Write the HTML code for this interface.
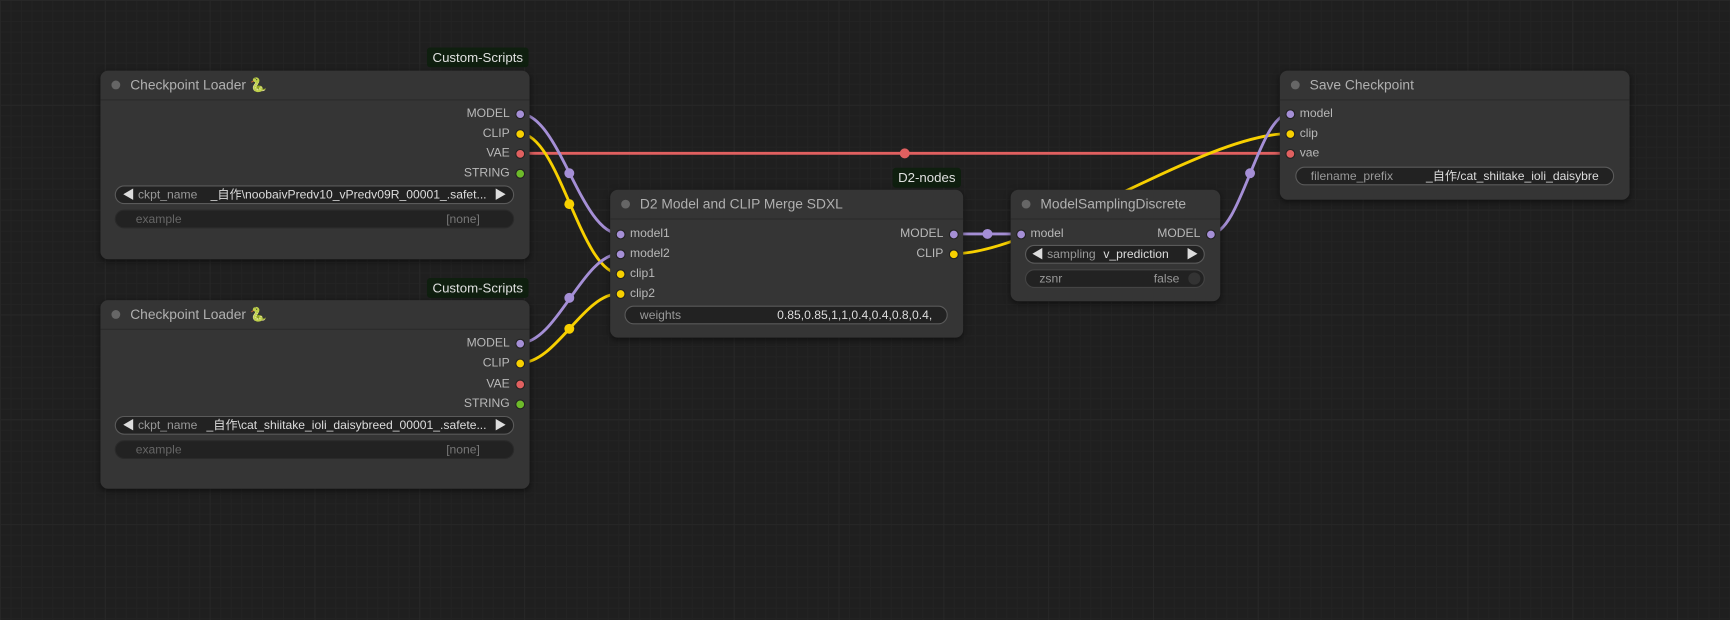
<!DOCTYPE html>
<html><head><meta charset="utf-8"><style>
html,body{margin:0;padding:0;width:1730px;height:620px;overflow:hidden;background:#202020}
#w{position:absolute;left:0;top:0;width:1568px;height:562px;transform:scale(1.10332);transform-origin:0 0;
background-color:#1f1f1f;
background-image:linear-gradient(#272727 1px,transparent 1px),linear-gradient(90deg,#272727 1px,transparent 1px),linear-gradient(#232323 1px,transparent 1px),linear-gradient(90deg,#232323 1px,transparent 1px);
background-size:95px 95px,95px 95px,9.5px 9.5px,9.5px 9.5px;
font-family:"Liberation Sans","Noto Sans CJK JP",sans-serif;font-size:11px;color:#aaa}
svg{position:absolute;left:0;top:0}
.n{position:absolute;background:#353535;border-radius:7px;box-shadow:0 2px 6px rgba(0,0,0,.5)}
.t{height:26px;border-bottom:1px solid #2b2b2b;position:relative;font-size:12.5px;color:#b0b0b0;line-height:26px;padding-left:27px}
.t:before{content:"";position:absolute;left:10px;top:9px;width:8px;height:8px;border-radius:50%;background:#666}
.b{position:absolute;background:#0f1f0f;color:#e0e0e0;font-size:12px;padding:0 5px;line-height:18px;border-radius:3px}
.o,.i{position:absolute;font-size:11px;color:#b8b8b8;line-height:12px}
.o{text-align:right}
.d{position:absolute;width:7px;height:7px;border-radius:50%;border:1px solid #222}
.wd{position:absolute;height:17px;border:1px solid #5a5a5a;border-radius:9px;background:#222;line-height:17px;font-size:11px;color:#999;box-sizing:border-box}
.wd.nb{border-color:#2a2a2a;color:#666}
.v{position:absolute;right:0;color:#ddd}
</style></head><body><div id="w">
<svg width="1568" height="562" viewBox="0 0 1568 562">
<g fill="none" stroke-width="2.6">
<path d="M471 139 L1169 139" stroke="#e06060"/>
<path d="M864 230 C940 230 1090 121 1169 121" stroke="#f7d000"/>
<path d="M471 103 C507 103 526 212 562 212" stroke="#a58fd6"/>
<path d="M471 121 C507 121 526 248 562 248" stroke="#f7d000"/>
<path d="M471 311 C505 311 528 230 562 230" stroke="#a58fd6"/>
<path d="M471 329 C505 329 528 266 562 266" stroke="#f7d000"/>
<path d="M864 212 L925 212" stroke="#a58fd6"/>
<path d="M1097 212 C1125 212 1141 103 1169 103" stroke="#a58fd6"/>
</g>
<g><circle cx="820" cy="139" r="4.5" fill="#e06060"/>
<circle cx="516" cy="157" r="4.5" fill="#a58fd6"/><circle cx="516" cy="185" r="4.5" fill="#f7d000"/>
<circle cx="516" cy="270" r="4.5" fill="#a58fd6"/><circle cx="516" cy="298" r="4.5" fill="#f7d000"/>
<circle cx="895" cy="212" r="4.5" fill="#a58fd6"/><circle cx="1133" cy="157" r="4.5" fill="#a58fd6"/></g>
</svg>

<div class="b" style="left:387px;top:43px">Custom-Scripts</div>
<div class="n" style="left:91px;top:64px;width:389px;height:171px">
<div class="t">Checkpoint Loader 🐍</div>
<div class="o" style="right:18px;top:33px">MODEL</div><div class="d" style="right:4px;top:35px;background:#a58fd6"></div>
<div class="o" style="right:18px;top:51px">CLIP</div><div class="d" style="right:4px;top:53px;background:#f7d000"></div>
<div class="o" style="right:18px;top:69px">VAE</div><div class="d" style="right:4px;top:71px;background:#e06060"></div>
<div class="o" style="right:18px;top:87px">STRING</div><div class="d" style="right:4px;top:89px;background:#6dba2a"></div>
<div class="wd" style="left:13px;top:104px;width:362px;padding-left:6px"><span style="color:#ddd">◀</span> ckpt_name<span class="v" style="right:24px">_自作\noobaivPredv10_vPredv09R_00001_.safet...</span><span class="v" style="right:6px">▶</span></div>
<div class="wd nb" style="left:13px;top:126px;width:362px;padding-left:18px">example<span class="v" style="right:30px;color:#777">[none]</span></div>
</div>

<div class="b" style="left:387px;top:252px">Custom-Scripts</div>
<div class="n" style="left:91px;top:272px;width:389px;height:171px">
<div class="t">Checkpoint Loader 🐍</div>
<div class="o" style="right:18px;top:33px">MODEL</div><div class="d" style="right:4px;top:35px;background:#a58fd6"></div>
<div class="o" style="right:18px;top:51px">CLIP</div><div class="d" style="right:4px;top:53px;background:#f7d000"></div>
<div class="o" style="right:18px;top:70px">VAE</div><div class="d" style="right:4px;top:72px;background:#e06060"></div>
<div class="o" style="right:18px;top:88px">STRING</div><div class="d" style="right:4px;top:90px;background:#6dba2a"></div>
<div class="wd" style="left:13px;top:105px;width:362px;padding-left:6px"><span style="color:#ddd">◀</span> ckpt_name<span class="v" style="right:24px">_自作\cat_shiitake_ioli_daisybreed_00001_.safete...</span><span class="v" style="right:6px">▶</span></div>
<div class="wd nb" style="left:13px;top:127px;width:362px;padding-left:18px">example<span class="v" style="right:30px;color:#777">[none]</span></div>
</div>

<div class="b" style="left:809px;top:152px">D2-nodes</div>
<div class="n" style="left:553px;top:172px;width:320px;height:134px">
<div class="t">D2 Model and CLIP Merge SDXL</div>
<div class="d" style="left:5px;top:36px;background:#a58fd6"></div><div class="i" style="left:18px;top:34px">model1</div>
<div class="d" style="left:5px;top:54px;background:#a58fd6"></div><div class="i" style="left:18px;top:52px">model2</div>
<div class="d" style="left:5px;top:72px;background:#f7d000"></div><div class="i" style="left:18px;top:70px">clip1</div>
<div class="d" style="left:5px;top:90px;background:#f7d000"></div><div class="i" style="left:18px;top:88px">clip2</div>
<div class="o" style="right:18px;top:34px">MODEL</div><div class="d" style="right:4px;top:36px;background:#a58fd6"></div>
<div class="o" style="right:18px;top:52px">CLIP</div><div class="d" style="right:4px;top:54px;background:#f7d000"></div>
<div class="wd" style="left:13px;top:105px;width:293px;padding-left:13px">weights<span class="v" style="right:13px">0.85,0.85,1,1,0.4,0.4,0.8,0.4,</span></div>
</div>

<div class="n" style="left:916px;top:172px;width:190px;height:101px">
<div class="t">ModelSamplingDiscrete</div>
<div class="d" style="left:5px;top:36px;background:#a58fd6"></div><div class="i" style="left:18px;top:34px">model</div>
<div class="o" style="right:18px;top:34px">MODEL</div><div class="d" style="right:4px;top:36px;background:#a58fd6"></div>
<div class="wd" style="left:13px;top:50px;width:163px;padding-left:5px"><span style="color:#ddd">◀</span> sampling<span class="v" style="right:60px;left:70px;text-align:left">v_prediction</span><span class="v" style="right:5px">▶</span></div>
<div class="wd" style="left:13px;top:72px;width:163px;padding-left:12px;border-color:#444">zsnr<span class="v" style="right:22px;color:#999">false</span><span style="position:absolute;right:3px;top:2px;width:11px;height:11px;border-radius:50%;background:#333"></span></div>
</div>

<div class="n" style="left:1160px;top:64px;width:317px;height:117px">
<div class="t">Save Checkpoint</div>
<div class="d" style="left:5px;top:35px;background:#a58fd6"></div><div class="i" style="left:18px;top:33px">model</div>
<div class="d" style="left:5px;top:53px;background:#f7d000"></div><div class="i" style="left:18px;top:51px">clip</div>
<div class="d" style="left:5px;top:71px;background:#e06060"></div><div class="i" style="left:18px;top:69px">vae</div>
<div class="wd" style="left:14px;top:87px;width:289px;padding-left:13px">filename_prefix<span class="v" style="right:13px">_自作/cat_shiitake_ioli_daisybre</span></div>
</div>
</div></body></html>
